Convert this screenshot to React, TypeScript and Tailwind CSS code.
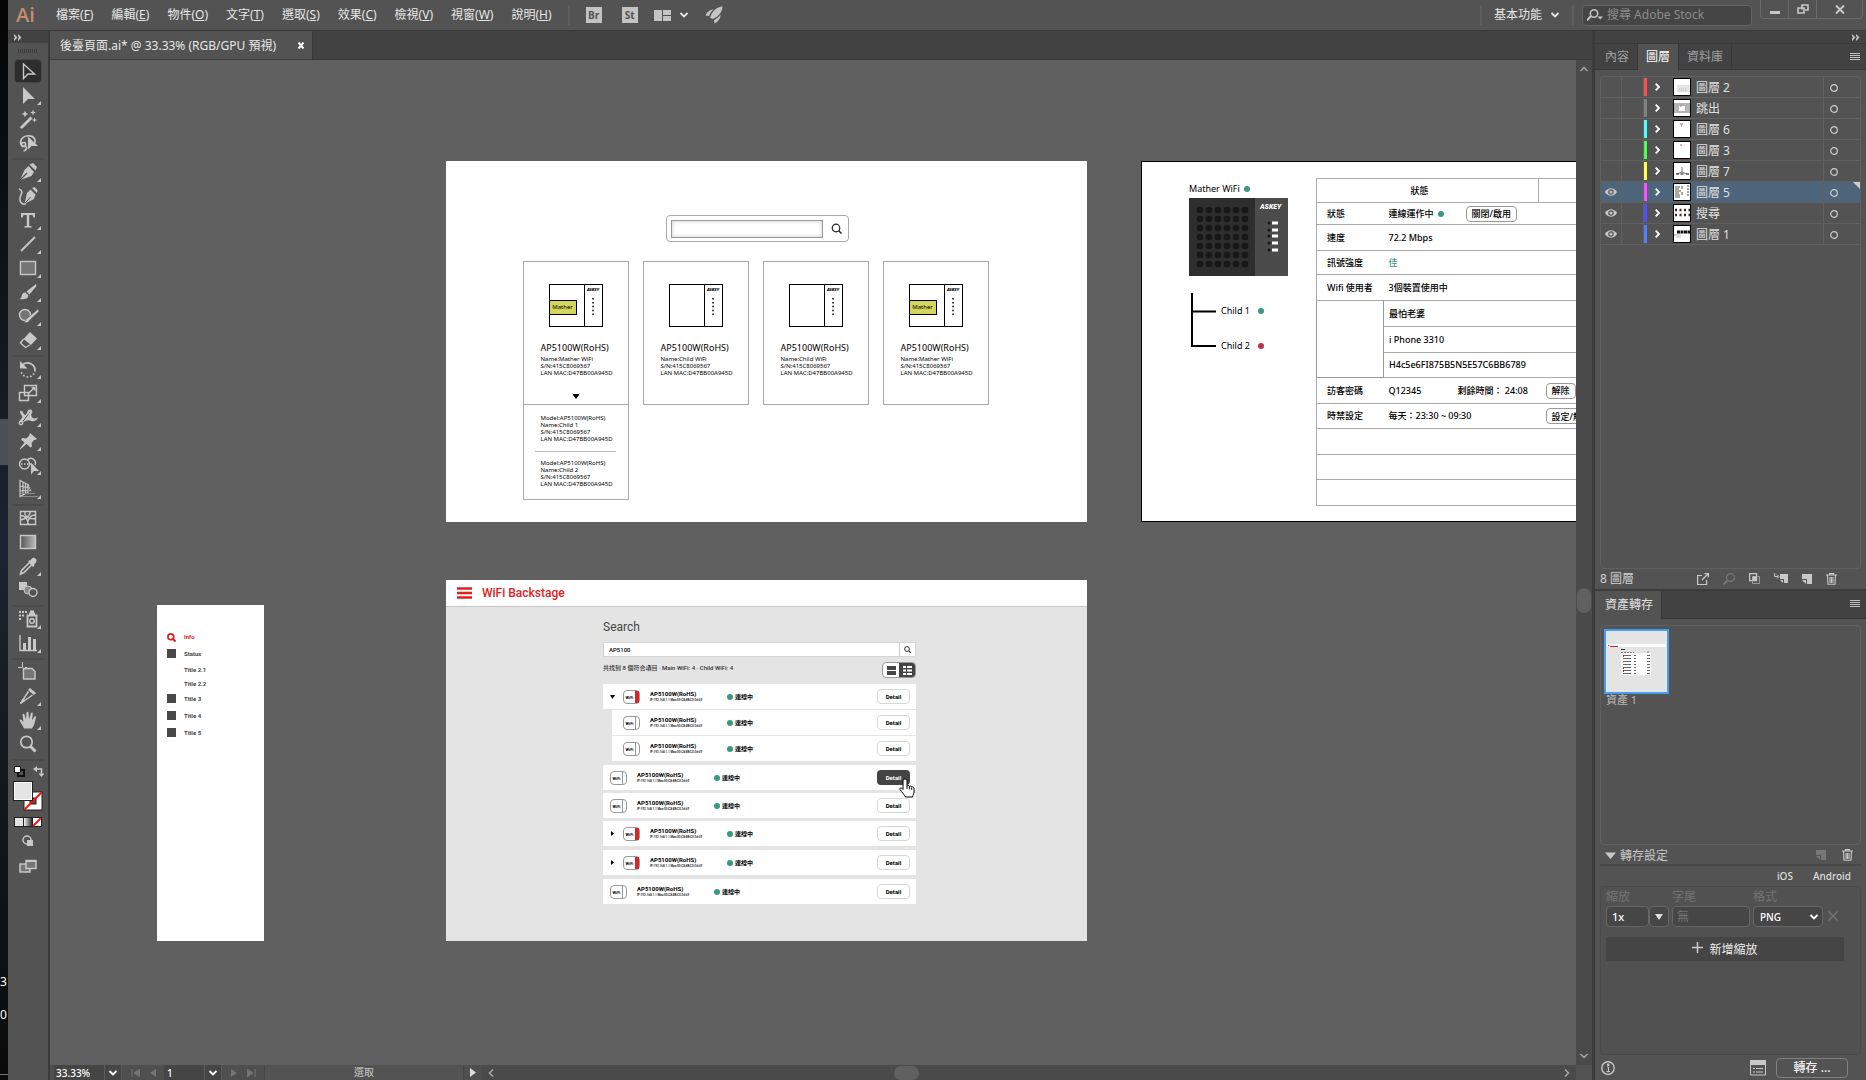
import React from "react";

const MENUS = [
  ["檔案", "F"],
  ["編輯", "E"],
  ["物件", "O"],
  ["文字", "T"],
  ["選取", "S"],
  ["效果", "C"],
  ["檢視", "V"],
  ["視窗", "W"],
  ["說明", "H"],
];

type IconProps = { children: React.ReactNode; w: number; h: number; className?: string };

function Glyph({ children, w, h, className = "" }: IconProps) {
  return (
    <svg width={w} height={h} viewBox={`0 0 ${w} ${h}`} fill="none" className={"block shrink-0 " + className} aria-hidden="true">
      {children}
    </svg>
  );
}

function Chevron({ className = "text-gray-200" }: { className?: string }) {
  return (
    <Glyph w={10} h={8} className={className}>
      <path d="M1.5 2l3.5 3.5L8.5 2" stroke="currentColor" strokeWidth="1.8" />
    </Glyph>
  );
}

function DoubleChevron() {
  return (
    <Glyph w={8} h={7} className="text-[#c8c8c8]">
      <path d="M0 0l3.5 3.5L0 7V5l1-1.5L0 2zM4 0l3.5 3.5L4 7V5l1-1.5L4 2z" fill="currentColor" />
    </Glyph>
  );
}

function MenuLines() {
  return (
    <Glyph w={10} h={8} className="text-[#c0c0c0]">
      <path d="M0 .5h10M0 2.5h10M0 4.5h10M0 6.5h10" stroke="currentColor" />
    </Glyph>
  );
}

function TitleBar() {
  return (
    <header className="flex h-[31px] shrink-0 items-center border-b border-[#383838] bg-[#535353] text-[12px] leading-4 text-[#e6e6e6]">
      <div className="w-12 pl-2 font-['Open_Sans',sans-serif] text-[20px] leading-[26px] font-semibold text-[#c68e6c]">Ai</div>
      <nav className="flex gap-[18px]">
        {MENUS.map(([name, key]) => (
          <button key={key} className="whitespace-nowrap">
            {name}(<span className="underline">{key}</span>)
          </button>
        ))}
      </nav>
      <div className="ml-4 h-5 w-0.5 bg-[#5e5e5e]" />
      <button className="ml-4 h-4 w-4 bg-[#c4c4c4] font-['Open_Sans',sans-serif] text-[10px] leading-4 font-bold text-[#535353]">Br</button>
      <button className="ml-5 h-4 w-4 bg-[#c4c4c4] font-['Open_Sans',sans-serif] text-[10px] leading-4 font-bold text-[#535353]">St</button>
      <button className="ml-4 flex items-center gap-2" aria-label="排列文件">
        <Glyph w={17} h={11} className="text-[#c4c4c4]">
          <path d="M0 0h8v11H0zM9 0h8v5H9zM9 6h8v5H9z" fill="currentColor" />
        </Glyph>
        <Chevron />
      </button>
      <button className="ml-4" aria-label="GPU 效能">
        <Glyph w={18} h={18} className="text-[#c4c4c4]">
          <path d="M17.5.5C12 1 7.500 4.500 5 11.500l2.500 1.500C13.500 11 17.500 6 17.500.5zM8.500 3.500C5 3.500 2 6 .5 9.500l3.500.5c.8-2.500 2.500-5 4.500-6.500zM15.500 8.500c-1.500 2.500-4 4.300-6.500 5.500L9.500 17.500C13 16 15.500 12.500 15.500 8.500z" fill="currentColor" />
        </Glyph>
      </button>
      <div className="ml-auto h-5 w-0.5 bg-[#5e5e5e]" />
      <button className="ml-3 flex items-center gap-2">
        基本功能
        <Chevron />
      </button>
      <div className="ml-3 h-5 w-0.5 bg-[#5e5e5e]" />
      <label className="ml-2 flex h-[21px] w-[170px] items-center gap-1 rounded border border-[#636363] bg-[#454545] px-1">
        <Glyph w={16} h={12} className="text-[#c4c4c4]">
          <circle cx="7" cy="4.5" r="3.7" stroke="currentColor" strokeWidth="1.5" />
          <path d="M4 7L0 11.5" stroke="currentColor" strokeWidth="2" />
          <path d="M10.5 7.5h5.5L13.2 10.5z" fill="currentColor" />
        </Glyph>
        <input aria-label="搜尋 Adobe Stock" placeholder="搜尋 Adobe Stock" className="w-full min-w-0 bg-transparent outline-none placeholder:text-[#8c8c8c]" />
      </label>
      <div className="mr-[3px] ml-2 flex h-[19px] self-start rounded-b border border-t-0 border-[#6a6a6a] text-[#c8c8c8]">
        <button className="flex w-7 items-center justify-center border-r border-[#6a6a6a]" aria-label="最小化">
          <Glyph w={10} h={12}><path d="M0 8h10v3H0z" fill="currentColor" /></Glyph>
        </button>
        <button className="flex w-7 items-center justify-center border-r border-[#6a6a6a]" aria-label="還原">
          <Glyph w={12} h={10}>
            <path d="M5 5.5V1h6v5H8M1 4h6v5H1z" stroke="currentColor" strokeWidth="1.6" />
          </Glyph>
        </button>
        <button className="flex w-[45px] items-center justify-center" aria-label="關閉">
          <Glyph w={10} h={9}><path d="M1 .5l8 8M9 .5l-8 8" stroke="currentColor" strokeWidth="2" /></Glyph>
        </button>
      </div>
    </header>
  );
}

type Tool = { name: string; art: React.ReactNode; more?: boolean; active?: boolean };

const S = { stroke: "currentColor", strokeWidth: 1.4 };
const F = { fill: "currentColor" };

const TOOL_GROUPS: Tool[][] = [
  [
    { name: "選取", active: true, art: <path d="M7.5 5v14.5l4.5-4.5h6.5z" {...S} /> },
    { name: "直接選取", more: true, art: <path d="M7 4v17l5-5h7z" {...F} /> },
    {
      name: "魔術棒",
      art: (
        <>
          <path d="M4 20L14.5 9.5l2 2L6.5 21.5q-2 .5-2.5-1.5z" {...F} />
          <path d="M9 3.5l1 2.5 2.5 1L10 8 9 10.5 8 8 5.5 7 8 6zM17 2.5l.8 2.2 2.2.8-2.2.8L17 8.5l-.8-2.2-2.2-.8 2.2-.8zM18.5 10.5l.7 1.8 1.8.7-1.8.7-.7 1.8-.7-1.8L16 13l1.8-.7z" {...F} />
        </>
      ),
    },
    {
      name: "套索",
      art: (
        <>
          <path d="M9 15.5C4 15 3.5 10.5 6 7.5c4-4.5 12-3 13 1.5.5 1.5 0 3-1 4M8 11.5c-3 0-3.5 4-.5 4s2.5-4 .5-4zM10 15.5c1.5 2 0 4-2.5 4.5" {...S} strokeWidth="1.7" />
          <path d="M12 5.5v13l3.5-3.5H22z" {...F} />
        </>
      ),
    },
  ],
  [
    { name: "鋼筆", more: true, art: <><path d="M13.5 4.5l6 6 1.5-3.5-4-4zM12.5 6l5.5 6-2.5 4L4 20l4.500-10z" {...F} /><path d="M4 20l7-7" stroke="#535353" strokeWidth="1.2" /></> },
    { name: "曲線", art: <><path d="M16 4l5 5 .5-3-3-3zM14.5 5.5l5 5-1.500 4.500-9.500 5L11 9z" {...F} /><path d="M8.5 20l6-7" stroke="#535353" /><path d="M3 5c3 1 3.5 3 2 6s-2 5 0 7.500 4 2 5 1" {...S} strokeWidth="1.6" /></> },
    { name: "文字", more: true, art: <path d="M5 5h14v4.5h-1.5L16.5 7H13.2v11H15.5v1.5h-7V18h2.3V7H7.5L6.5 9.5H5z" {...F} /> },
    { name: "線段", more: true, art: <path d="M5 19L19 5" {...S} strokeWidth="2" /> },
    { name: "矩形", more: true, art: <rect x="4.5" y="5.5" width="15" height="13" fill="#757575" {...S} /> },
    { name: "筆刷", more: true, art: <><path d="M20 4L10.500 11.500l3 3L20.500 6z" {...F} /><path d="M9.5 12.5c-3 0-3.500 2-4 4.500L4 19c4 .8 8 0 8.500-3.500z" {...F} /></> },
    { name: "點滴筆刷", more: true, art: <><circle cx="9" cy="11" r="5.5" fill="#757575" {...S} /><path d="M22 5L11.5 14c-2 .5-2 3-3.500 4.500 3 .5 5 0 6-2.500L23 7.500z" {...F} stroke="#535353" strokeWidth=".6" /></> },
    { name: "橡皮擦", more: true, art: <><path d="M14 4l7 6.500-6 6.500-7.500-6z" {...F} /><path d="M7.5 11L4.5 15l5 4.500 4.500-2.500" {...S} /></> },
  ],
  [
    { name: "旋轉", more: true, art: <><path d="M7 7.500c5-4 12 0 12 5.500" {...S} strokeWidth="1.8" /><path d="M4 4v7.500h7.500z" {...F} /><path d="M19 13c0 4-3.500 7-7 7s-7-3-7-6" {...S} strokeWidth="1.6" strokeDasharray="1.6 2" /></> },
    { name: "縮放", more: true, art: <><path d="M8.5 4.5h12v10h-12zM3.5 11.5h9v8h-9zM12 13l6-6" {...S} /><path d="M15 6h4.500v4.500z" {...F} /></> },
    { name: "寬度", more: true, art: <><path d="M4 6c3-1 3 3 5 4 2 0 2-5 5-5 2 2 0 6 3 8 2 1 4 0 5-1-1 4-4 5-7 4-3-2-6 0-9 2l-2-2c1-3 3-3 2-5C5 9 4 8 4 6z" {...F} /><path d="M5 19L14 7" stroke="#535353" /><circle cx="5" cy="18" r="1.7" {...S} /><circle cx="14" cy="7" r="1.7" {...S} /></> },
    { name: "操控彎曲", more: true, art: <path d="M14 4l7 6-2 1-1 0-2.500 3 .5 3.500-1.500 1L10.500 15 4 20.500 3.500 20 8.500 13.500 5 10.500 6.500 9l3.500.5L13 7z" {...F} /> },
    { name: "形狀建立程式", more: true, art: <><circle cx="8.5" cy="11" r="5" {...S} /><path d="M11 7c4-4 10 0 8 5" {...S} /><path d="M5 11h10" {...S} strokeDasharray="1.5 1.5" /><path d="M15 9.500v12l3-3.500h5z" {...F} /></> },
    { name: "透視格點", more: true, art: <><path d="M4 3.500l8 4v8l-8 4zM7 5v13M9.500 6.500v10M4 9l8 1.500M4 14l8-.5" {...S} strokeWidth="1.2" /><path d="M12 8l3 7" {...S} strokeWidth="2" strokeDasharray="1.5 1" /><path d="M5 16.500h14M5 19.500h17" stroke="#8a8a8a" /></> },
  ],
  [
    { name: "網格", art: <path d="M4.5 5.5h15v13h-15zM4.5 14c5-1 9-3 10-8.500M9 5.500c-1 5 4 8 10.500 7M4.500 9.500c4 0 7 3 8 9M19.500 9c-5 0-8 4-8 9.500" {...S} /> },
    { name: "漸層", art: <><defs><linearGradient id="grad-tool"><stop stopColor="#555" /><stop offset="1" stopColor="#bbb" /></linearGradient></defs><rect x="4.5" y="5.5" width="15" height="13" fill="url(#grad-tool)" {...S} /></> },
    { name: "檢色滴管", more: true, art: <><path d="M14 6.500l2-2c2-2 6 1 4 4l-2 2 .5 1-1.500 1.500-5-5L13.500 6z" {...F} /><path d="M13 9l-7.500 7.500L4.500 20l3.500-1.500L15.500 11" {...S} strokeWidth="1.6" /></> },
    { name: "漸變", art: <><path d="M3 4h8v8H3z" {...F} /><circle cx="12" cy="12" r="4" fill="#8a8a8a" stroke="#c8c8c8" /><circle cx="17" cy="14.5" r="4" fill="#535353" {...S} /></> },
  ],
  [
    { name: "符號噴灑器", more: true, art: <><path d="M3 4h2v2H3zM6 4h2v2H6zM9 4h2v2H9zM3 7.500h2v2H3zM6 7.500h2v2H6zM3 11h2v2H3zM14 3.500h4v3h-4z" {...F} /><path d="M11.500 8.500h9v11h-9zM13 6.500h6" {...S} strokeWidth="1.8" /><circle cx="16" cy="14" r="2.3" {...S} /></> },
    { name: "長條圖", more: true, art: <><path d="M4 4v15.500h17" {...S} /><path d="M7 12h3v7H7zM12 6h3v13h-3zM17 8h3v11h-3z" {...F} /></> },
  ],
  [
    { name: "工作區域", art: <><path d="M6.500 2v5.500H2M9 7.500h2" {...S} strokeWidth="1" /><path d="M7.500 8.500h8.500l3 3v7.500H7.500z" fill="#757575" {...S} /></> },
    { name: "切片", more: true, art: <><path d="M14 4l6 5-2 2-6-5z" {...F} /><path d="M12.500 7.500L4.500 19.500 16.500 11" {...S} /><path d="M4 20l6-4-3.500-1z" {...F} /></> },
    { name: "手形", more: true, art: <path d="M8 20.500C7 17.500 4 14 3.500 12c1-1 2.500 0 4 2L6.500 6.500c.5-1 1.700-1 2 0L10 11.500 10.500 4.500c.5-1 1.700-1 2 0l.5 7L15 5c.7-1 1.800-.5 1.800.5L16 12.500l2.500-4c.8-.7 1.700 0 1.500 1-1 3.500-1.500 8-4 11z" {...F} /> },
    { name: "縮放顯示", art: <><circle cx="10.5" cy="10" r="5.7" {...S} strokeWidth="1.7" /><path d="M14.500 14.500l5 5" {...S} strokeWidth="3" /></> },
  ],
];

function Toolbar() {
  return (
    <aside className="flex w-[42px] shrink-0 flex-col border-r-2 border-[#3b3b3b] bg-[#535353] text-[#c8c8c8]">
      <div className="flex h-3 items-center bg-[#424242] pl-1.5">
        <DoubleChevron />
      </div>
      <div className="flex h-4 items-center justify-center">
        <Glyph w={20} h={4}>
          <path d="M0 2h20" stroke="#3c3c3c" strokeWidth="4" strokeDasharray="1 1" />
        </Glyph>
      </div>
      {TOOL_GROUPS.map((group, i) => (
        <div key={i} className="mx-1 flex flex-col border-b-2 border-[#4b4b4b] pb-[3px]">
          {group.map((t) => (
            <button key={t.name} aria-label={t.name} className={t.active ? "mx-0.5 flex h-6 justify-center rounded-sm border border-[#484848] bg-[#2d2d2d]" : "flex h-6 justify-center"}>
              <svg width="32" height="24" viewBox="0 0 32 24" fill="none" className="block shrink-0" aria-hidden="true">
                <g transform={t.active ? "translate(4 -1)" : "translate(4 0)"}>{t.art}</g>
                {t.more && <path d="M29 18v4h-4z" fill="currentColor" />}
              </svg>
            </button>
          ))}
        </div>
      ))}
      <div className="flex flex-col items-center">
        <div className="mt-1 flex gap-2">
          <Glyph w={12} h={12}>
            <path d="M5 5h6v6H5z" stroke="#111" strokeWidth="2" />
            <path d="M1.5 1.5h6v6h-6z" fill="#fff" stroke="#111" />
          </Glyph>
          <Glyph w={11} h={12} className="text-[#c8c8c8]">
            <path d="M3 4h5.5v5" stroke="currentColor" strokeWidth="1.5" />
            <path d="M0 4l4-3v6zM5.5 8.500h6L8.500 12z" fill="currentColor" />
          </Glyph>
        </div>
        <Glyph w={30} h={30} className="mt-1">
          <rect x="11" y="11" width="18" height="18" fill="#fff" stroke="#222" />
          <rect x="17" y="17" width="6" height="6" fill="#535353" stroke="#222" />
          <path d="M11.5 28.5l17-17" stroke="#f11" strokeWidth="2" />
          <rect x=".5" y=".5" width="19" height="19" fill="#e4e4e4" stroke="#222" />
          <rect x="1.5" y="1.5" width="17" height="17" stroke="#fff" />
        </Glyph>
        <Glyph w={28} h={10} className="mt-1.5">
          <defs>
            <linearGradient id="swatch"><stop stopColor="#fff" /><stop offset="1" stopColor="#222" /></linearGradient>
          </defs>
          <rect x=".5" y=".5" width="27" height="9" fill="#e4e4e4" stroke="#222" />
          <rect x="9.5" y=".5" width="9" height="9" fill="url(#swatch)" stroke="#222" />
          <rect x="18.5" y=".5" width="9" height="9" fill="#fff" stroke="#222" />
          <path d="M19 9l8-8" stroke="#f11" strokeWidth="2" />
        </Glyph>
        <Glyph w={12} h={12} className="mt-2">
          <circle cx="5" cy="5" r="4" stroke="#c8c8c8" strokeWidth="1.5" />
          <path d="M5 5h6v6H5z" fill="#c8c8c8" />
        </Glyph>
        <Glyph w={18} h={14} className="mt-3">
          <path d="M1 5h10v8H1z" fill="#757575" stroke="#c8c8c8" strokeWidth="1.5" />
          <path d="M7 1.500h10v8H7z" fill="#757575" stroke="#c8c8c8" strokeWidth="1.5" />
          <path d="M7 2h10" stroke="#c8c8c8" strokeWidth="2" />
        </Glyph>
      </div>
    </aside>
  );
}

function Dot({ color = "bg-[#389980]" }: { color?: string }) {
  return <span className={"inline-block h-1.5 w-1.5 shrink-0 rounded-full " + color} />;
}

function RouterOutline({ mather }: { mather: boolean }) {
  return (
    <div className="mx-auto flex h-[43px] w-[54px] items-center border border-black">
      {mather && (
        <span className="mt-1 h-[15px] w-[27px] border border-l-0 border-black bg-[#d3d55c] text-center text-[6px] leading-3 text-black">Mather</span>
      )}
      <div className="ml-auto flex h-full w-[18px] flex-col items-center border-l border-black">
        <span className="mt-0.5 text-[4px] leading-[5px] font-black italic">ASKEY</span>
        <Glyph w={2} h={18} className="mt-1.5">
          <path d="M1 0v18" stroke="#000" strokeWidth="1.5" strokeDasharray="1.5 2.4" />
        </Glyph>
      </div>
    </div>
  );
}

const CARDS = [
  { name: "Mather WiFi", mather: true, open: true },
  { name: "Child WiFi", mather: false, open: false },
  { name: "Child WiFi", mather: false, open: false },
  { name: "Mather WiFi", mather: true, open: false },
];

function SearchArtboard() {
  return (
    <section className="absolute top-[101px] left-[396px] flex h-[361px] w-[641px] flex-col items-center bg-white text-black">
      <div className="mt-[54px] mr-[18px] flex h-[27px] w-[183px] items-center rounded-sm border border-[#a8a8a8] pl-1">
        <input aria-label="搜尋裝置" className="h-[18px] w-[152px] border border-[#999] shadow-[inset_0_0_4px_#ccc] outline-none" />
        <button aria-label="搜尋" className="ml-2">
          <Glyph w={11} h={11}>
            <circle cx="5" cy="5" r="3.8" stroke="#222" strokeWidth="1.2" />
            <path d="M7.5 7.5L10.5 10.5" stroke="#222" strokeWidth="1.5" />
          </Glyph>
        </button>
      </div>
      <div className="mt-[19px] mr-[22px] flex items-start gap-[14px]">
        {CARDS.map((c, i) => (
          <article key={i} className="w-[106px]">
            <div className="flex h-[144px] flex-col border border-[#a8a8a8] pt-[22px]">
              <RouterOutline mather={c.mather} />
              <h3 className="mt-[15px] pl-[17px] text-[9px] leading-3">AP5100W(RoHS)</h3>
              <p className="mt-0.5 pl-[17px] text-[6px] leading-[7px] whitespace-nowrap">
                Name:{c.name}
                <br />
                S/N:415C8069567
                <br />
                LAN MAC:D47BB00A945D
              </p>
              {c.open && (
                <Glyph w={6} h={5} className="mx-auto mt-[17px]">
                  <path d="M0 0h6v1L3 5 0 1z" fill="#000" />
                </Glyph>
              )}
            </div>
            {c.open && (
              <div className="-mt-px flex h-24 flex-col border border-[#a8a8a8] pt-2.5 pl-[17px] text-[6px] leading-[7px] whitespace-nowrap">
                <p>Model:AP5100W(RoHS)<br />Name:Child 1<br />S/N:415C8069567<br />LAN MAC:D47BB00A945D</p>
                <hr className="mt-2 mr-3 -ml-1.5 border-[#b8b8b8]" />
                <p className="mt-2">Model:AP5100W(RoHS)<br />Name:Child 2<br />S/N:415C8069567<br />LAN MAC:D47BB00A945D</p>
              </div>
            )}
          </article>
        ))}
      </div>
    </section>
  );
}

function DevicePhoto() {
  return (
    <Glyph w={99} h={78} className="mt-[3px]">
      <rect width="99" height="78" fill="#2e2e2e" />
      <rect x="66" width="33" height="78" fill="#4b4b4b" />
      {[0, 1, 2, 3, 4, 5, 6].map((r) =>
        [0, 1, 2, 3, 4, 5].map((c) => <circle key={`${r}-${c}`} cx={11 + c * 9} cy={12 + r * 9} r="3.3" fill="#171717" />),
      )}
      <text x="71" y="11" fontSize="7" fontWeight="900" fontStyle="italic" fill="#fff" fontFamily="Roboto, sans-serif">ASKEY</text>
      {[25, 32, 38, 45, 52].map((y) => (
        <g key={y}>
          <circle cx="80" cy={y} r="1.5" fill="#171717" />
          <rect x="83" y={y - 1.5} width="6" height="3" fill="#fff" />
        </g>
      ))}
    </Glyph>
  );
}

const CELL = "border-y border-[#aaa] p-0 pl-[5px] font-medium whitespace-nowrap";
const LABEL = "border-y border-l border-[#aaa] p-0 pl-2.5 text-left font-medium whitespace-nowrap";
const PILL = "inline-block h-4 rounded border border-[#999] px-[5px] leading-[13px] bg-white";

function StatusArtboard() {
  return (
    <section className="absolute top-[101px] left-[1091px] flex h-[361px] w-[642px] border border-black bg-white text-[9px] leading-3 text-black">
      <div className="ml-[47px] w-[127px] shrink-0 pt-[21px]">
        <div className="flex items-center gap-1">
          Mather WiFi <Dot />
        </div>
        <DevicePhoto />
        <div className="mt-4 flex">
          <Glyph w={26} h={56} className="ml-0.5">
            <path d="M1 1v53M1 19.5h24M0 54h25" stroke="#000" strokeWidth="2" />
          </Glyph>
          <ul className="mt-[13px] ml-1 flex flex-col gap-[23px]">
            <li className="flex items-center gap-2">Child 1 <Dot /></li>
            <li className="flex items-center gap-2">Child 2 <Dot color="bg-[#bf3447]" /></li>
          </ul>
        </div>
      </div>
      <table className="mt-4 h-[327px] w-[444px] shrink-0 table-fixed border-collapse self-start border border-[#aaa]">
        <colgroup>
          <col className="w-[67px]" />
          <col className="w-[155px]" />
          <col />
        </colgroup>
        <tbody>
          <tr className="h-6">
            <th colSpan={2} className="border border-[#aaa] p-0 pr-4 font-medium">狀態</th>
            <th className="border border-[#aaa] p-0" />
          </tr>
          <tr className="h-[22px]">
            <th className={LABEL}>狀態</th>
            <td colSpan={2} className={CELL}>
              <div className="flex items-center">
                連線運作中
                <span className="ml-1 flex w-7"><Dot /></span>
                <button className={PILL}>關閉/啟用</button>
              </div>
            </td>
          </tr>
          <tr className="h-[26px]"><th className={LABEL}>速度</th><td colSpan={2} className={CELL}>72.2 Mbps</td></tr>
          <tr className="h-6"><th className={LABEL}>訊號強度</th><td colSpan={2} className={CELL + " text-[#389980]"}>佳</td></tr>
          <tr className="h-[26px]"><th className={LABEL}>Wifi 使用者</th><td colSpan={2} className={CELL}>3個裝置使用中</td></tr>
          <tr className="h-[26px]">
            <th rowSpan={3} className="border border-[#999] p-0" />
            <td colSpan={2} className={CELL}>最怕老婆</td>
          </tr>
          <tr className="h-[26px]"><td colSpan={2} className={CELL}>i Phone 3310</td></tr>
          <tr className="h-[25px]"><td colSpan={2} className={CELL}>H4c5e6FI875B5N5E57C6BB6789</td></tr>
          <tr className="h-[26px]">
            <th className={LABEL}>訪客密碼</th>
            <td colSpan={2} className={CELL}>
              <div className="flex items-center">
                <span className="w-[69px]">Q12345</span>
                <span className="w-[88px]">剩餘時間： 24:08</span>
                <button className={PILL}>解除</button>
              </div>
            </td>
          </tr>
          <tr className="h-[25px]">
            <th className={LABEL}>時禁設定</th>
            <td colSpan={2} className={CELL}>
              <div className="flex items-center">
                <span className="w-[157px]">每天：23:30 ~ 09:30</span>
                <button className={PILL}>設定/解除</button>
              </div>
            </td>
          </tr>
          <tr className="h-[26px]"><td colSpan={3} className={CELL} /></tr>
          <tr className="h-[25px]"><td colSpan={3} className={CELL} /></tr>
          <tr className="h-[26px]"><td colSpan={3} className={CELL} /></tr>
        </tbody>
      </table>
    </section>
  );
}

type Row = { kind: "open" | "child" | "closed" | "single"; gap: string; hover?: boolean };
const ROWS: Row[] = [
  { kind: "open", gap: "mt-1.5" },
  { kind: "child", gap: "mt-px" },
  { kind: "child", gap: "mt-px" },
  { kind: "single", gap: "mt-1", hover: true },
  { kind: "single", gap: "mt-[3px]" },
  { kind: "closed", gap: "mt-[3px]" },
  { kind: "closed", gap: "mt-1" },
  { kind: "single", gap: "mt-1" },
];

function DeviceBadge({ red }: { red: boolean }) {
  return (
    <span className="flex h-[14px] w-[17px] shrink-0 rounded-sm border border-[#999] bg-white">
      <span className="flex-1 text-center text-[4px] leading-[13px] font-bold">WiFi</span>
      <span className={red ? "w-1 bg-[#dd2420]" : "w-1 border-l border-[#999]"} />
    </span>
  );
}

function BackstageArtboard() {
  return (
    <section className="absolute top-[520px] left-[396px] h-[361px] w-[641px] bg-[#e4e4e4] font-[Roboto,'Noto_Sans_CJK_TC',sans-serif] text-black">
      <div className="flex h-[27px] items-center border-b border-[#c4c4c4] bg-white pl-[11px] text-[#e0201c]">
        <Glyph w={15} h={12}>
          <path d="M0 1.5h15M0 6h15M0 10.5h15" stroke="currentColor" strokeWidth="2.4" />
        </Glyph>
        <h1 className="ml-2.5 text-[12px] leading-4 font-medium">WiFi Backstage</h1>
      </div>
      <div className="ml-[157px] w-[313px]">
        <h2 className="pt-3 text-[12px] leading-4 text-[#444]">Search</h2>
        <div className="mt-[7px] flex h-[15px] border border-[#d4d4d4] bg-white">
          <input aria-label="Search" defaultValue="AP5100" className="min-w-0 flex-1 pl-[5px] text-[6px] leading-3 font-medium outline-none" />
          <button aria-label="Search" className="flex w-4 items-center justify-center border-l border-[#ccc]">
            <Glyph w={7} h={7}>
              <circle cx="3" cy="3" r="2.4" stroke="#333" />
              <path d="M5 5l2 2" stroke="#333" strokeWidth="1.2" />
            </Glyph>
          </button>
        </div>
        <div className="mt-1 flex h-[17px] items-start justify-between">
          <p className="mt-[3px] text-[6px] leading-2 font-medium whitespace-pre text-[#333]">{"共找到 8 個符合項目 · Main WiFi: 4 · Child WiFi: 4"}</p>
          <div className="mt-px flex h-4 w-[34px] overflow-hidden rounded-sm border border-[#999] bg-white">
            <button aria-label="格狀" className="flex flex-1 items-center justify-center">
              <Glyph w={9} h={9}><path d="M0 0h9v4H0zM0 5h9v4H0z" fill="#444" /></Glyph>
            </button>
            <button aria-label="列表" className="flex flex-1 items-center justify-center bg-[#444]">
              <Glyph w={9} h={9}><path d="M0 0h3v2H0zM4 0h5v2H4zM0 3.5h3v2H0zM4 3.5h5v2H4zM0 7h3v2H0zM4 7h5v2H4z" fill="#fff" /></Glyph>
            </button>
          </div>
        </div>
        <ul>
          {ROWS.map((r, i) => (
            <li key={i} className={`${r.gap} ${r.kind === "child" ? "ml-[9px] pl-[11px]" : "pl-[7px]"} flex h-[25px] items-center bg-white pr-1.5`}>
              {(r.kind === "open" || r.kind === "closed") && (
                <Glyph w={5} h={5} className="mr-2">
                  <path d={r.kind === "open" ? "M0 1h5L2.5 5z" : "M1 0v5l3-2.5z"} fill="#000" />
                </Glyph>
              )}
              <DeviceBadge red={r.kind === "open" || r.kind === "closed"} />
              <div className="mb-0.5 ml-2.5 w-[77px] whitespace-nowrap">
                <h3 className="text-[6px] leading-2 font-bold">AP5100W(RoHS)</h3>
                <p className="text-[3px] leading-1 font-medium">IP:192.168.1.1 Mac:00:C8:8B:C0:2d:69</p>
              </div>
              <span className="flex items-center gap-0.5 text-[6px] leading-2 font-bold">
                <Dot />
                連線中
              </span>
              <button className={r.hover ? "ml-auto h-[15px] w-[33px] rounded-sm bg-[#444] text-[6px] leading-3 font-bold text-white" : "ml-auto h-[15px] w-[33px] rounded-sm border border-[#d8d8d8] bg-white text-[6px] leading-3 font-bold"}>
                Detail
              </button>
            </li>
          ))}
        </ul>
      </div>
      <Glyph w={16} h={20} className="absolute top-[198px] left-[453px]">
        <path d="M6 1c1.5 0 2 1 2 2v5c.8-.8 2-.6 2.4.3.8-.6 2-.3 2.3.7 1-.4 2.3.2 2.3 1.5V14c0 2-1 3-1.5 5H6.5C5.5 17 3 14.5 1 11.5c-.5-1.5 1-2 2-1l1 1V3c0-1 .7-2 2-2z" fill="#fff" stroke="#000" />
        <path d="M8 8v3M10.4 8.5v2.8M12.7 9.5v2.3" stroke="#000" />
      </Glyph>
    </section>
  );
}

const NAV = [
  { t: "Status", sub: false, h: "h-[17px]" },
  { t: "Title 2.1", sub: true, h: "h-4" },
  { t: "Title 2.2", sub: true, h: "h-3" },
  { t: "Title 3", sub: false, h: "h-[17px]" },
  { t: "Title 4", sub: false, h: "h-[17px]" },
  { t: "Title 5", sub: false, h: "h-[17px]" },
];

function NavArtboard() {
  return (
    <section className="absolute top-[545px] left-[107px] h-[336px] w-[107px] bg-white pt-6 pl-2.5 font-[Roboto,sans-serif] text-[6px] leading-2 font-bold text-[#444]">
      <a href="#info" className="flex h-4 items-center gap-2 text-[#e0201c]">
        <Glyph w={9} h={9}>
          <circle cx="3.8" cy="3.8" r="2.9" stroke="currentColor" strokeWidth="1.7" />
          <path d="M6 6l2.5 2.5" stroke="currentColor" strokeWidth="2.2" />
        </Glyph>
        Info
      </a>
      {NAV.map((n) => (
        <a key={n.t} href={"#" + n.t.replace(/\W/g, "")} className={`flex items-center gap-2 ${n.h}`}>
          <span className={n.sub ? "w-[9px]" : "h-[9px] w-[9px] bg-[#484848]"} />
          {n.t}
        </a>
      ))}
    </section>
  );
}

function StatusBar() {
  const combo = "flex h-full items-center border-r border-[#5c5c5c] bg-[#454545]";
  return (
    <footer className="flex h-[15px] shrink-0 items-center bg-[#4f4f4f] pl-1 text-[11px] leading-[14px] text-white">
      <div className={combo}>
        <input aria-label="縮放顯示比例" defaultValue="33.33%" className="w-[50px] pl-0.5 text-[10px] leading-[14px] font-medium outline-none" />
        <button aria-label="選擇縮放顯示比例" className="flex h-full w-[17px] items-center justify-center border-l border-[#5c5c5c]"><Chevron className="text-white" /></button>
      </div>
      <div className="flex w-[42px] items-center justify-center gap-2.5 text-[#757575]">
        <button aria-label="第一個"><Glyph w={9} h={8}><path d="M1 0v8M9 0v8L3 4z" fill="currentColor" stroke="currentColor" /></Glyph></button>
        <button aria-label="上一個"><Glyph w={6} h={8}><path d="M6 0v8L0 4z" fill="currentColor" /></Glyph></button>
      </div>
      <div className={combo}>
        <input aria-label="工作區域" defaultValue="1" className="w-10 pl-[3px] text-[10px] leading-[14px] font-medium outline-none" />
        <button aria-label="選擇工作區域" className="flex h-full w-[17px] items-center justify-center border-l border-[#5c5c5c]"><Chevron className="text-white" /></button>
      </div>
      <div className="flex w-[42px] items-center justify-center gap-2.5 text-[#757575]">
        <button aria-label="下一個"><Glyph w={6} h={8}><path d="M0 0v8l6-4z" fill="currentColor" /></Glyph></button>
        <button aria-label="最後一個"><Glyph w={9} h={8}><path d="M8 0v8M0 0v8l6-4z" fill="currentColor" stroke="currentColor" /></Glyph></button>
      </div>
      <div className="h-full w-[200px] border-x border-[#454545] bg-[#535353] text-center text-[10px] text-[#c8c8c8]">選取</div>
      <button aria-label="狀態選單" className="flex w-[18px] justify-center"><Glyph w={6} h={9}><path d="M0 0v9l6-4.5z" fill="#ddd" /></Glyph></button>
      <div className="flex h-full flex-1 items-center justify-between bg-[#4a4a4a] px-1.5 text-[#a8a8a8]">
        <Glyph w={6} h={8}><path d="M5 .5L1.5 4 5 7.5" stroke="currentColor" strokeWidth="1.5" /></Glyph>
        <div className="mr-[246px] h-[14px] w-[25px] rounded-full bg-[#606060]" />
        <Glyph w={6} h={8}><path d="M1 .5L4.5 4 1 7.5" stroke="currentColor" strokeWidth="1.5" /></Glyph>
      </div>
      <div className="h-full w-4 bg-[#535353]" />
    </footer>
  );
}

function Workspace() {
  return (
    <main className="flex min-w-0 flex-1 flex-col">
      <div className="flex h-[29px] shrink-0 border-b border-[#383838] bg-[#424242]">
        <div className="flex items-center border-r border-[#383838] bg-[#535353] pt-px pr-2 pl-2.5 text-[12px] text-[#e6e6e6]">
          <button className="whitespace-nowrap">後臺頁面.ai* @ 33.33% (RGB/GPU 預視)</button>
          <button aria-label="關閉文件" className="ml-[22px]">
            <Glyph w={6} h={7}><path d="M.5.5l5 6M5.5.5l-5 6" stroke="#fff" strokeWidth="2" /></Glyph>
          </button>
        </div>
      </div>
      <div className="flex min-h-0 flex-1">
        <div className="relative min-w-0 flex-1 overflow-hidden bg-[#606060]">
          <SearchArtboard />
          <StatusArtboard />
          <NavArtboard />
          <BackstageArtboard />
        </div>
        <div className="flex w-4 shrink-0 flex-col items-center bg-[#4a4a4a] py-1.5 text-[#a8a8a8]">
          <Glyph w={8} h={6}><path d="M.5 5L4 1.5 7.5 5" stroke="currentColor" strokeWidth="1.5" /></Glyph>
          <div className="h-[52%]" />
          <div className="h-[25px] w-[14px] rounded-full bg-[#606060]" />
          <Glyph w={8} h={6} className="mt-auto"><path d="M.5 1L4 4.5 7.5 1" stroke="currentColor" strokeWidth="1.5" /></Glyph>
        </div>
      </div>
      <StatusBar />
    </main>
  );
}

const LAYERS = [
  { name: "圖層 2", bar: "bg-[#ff4f4f]", on: false, art: <><path d="M3 6h13v7H3z" fill="#e4e4e4" /><path d="M5 10h7M5 12h7" stroke="#bbb" strokeDasharray="1 1" /></> },
  { name: "跳出", bar: "bg-[#808080]", on: false, art: <><path d="M0 3h16v10H0z" fill="#b4b4b4" /><path d="M5 6h6v5H5z" fill="#fff" /><path d="M6 6h2" stroke="#c66" /></> },
  { name: "圖層 6", bar: "bg-[#4fffff]", on: false, art: <path d="M6 3h3M7 5h1" stroke="#966" /> },
  { name: "圖層 3", bar: "bg-[#4fff4f]", on: false, art: <path d="M6 3h2" stroke="#e55" /> },
  { name: "圖層 7", bar: "bg-[#ffff4f]", on: false, art: <><path d="M8 4v5M3 11l5-2 5 2" stroke="#777" /><path d="M2 11h3M6.5 11h3M12 11h3" stroke="#555" strokeWidth="1.5" /></> },
  { name: "圖層 5", bar: "bg-[#ff4fff]", on: true, art: <path d="M1 3h5M1 5h4M1 7h6M1 9h4M1 11h5M1 13h5M8 2v3M8 8v3M13 2h2M13 5h2M13 8h2M13 11h2" stroke="#555" /> },
  { name: "搜尋", bar: "bg-[#4f4fff]", on: true, art: <path d="M1 5h15M1 10h15" stroke="#422" strokeWidth="2.5" strokeDasharray="2 2.5" /> },
  { name: "圖層 1", bar: "bg-[#4f80ff]", on: true, art: <><path d="M3 6h13" stroke="#111" strokeWidth="3" strokeDasharray="3 .5" /><path d="M2 8h5v4H2z" fill="#ddd" /><path d="M1 8v2" stroke="#c66" /></> },
];

function TrashIcon() {
  return (
    <Glyph w={11} h={12}>
      <path d="M0 2h11M3.5 2V.6h4V2M1.5 2l.5 9.3h7L9.5 2M4 4v6M5.5 4v6M7 4v6" stroke="currentColor" strokeWidth="1.1" />
    </Glyph>
  );
}

function NewIcon() {
  return (
    <Glyph w={10} h={10}>
      <path d="M0 0h10v10H5V5H0zM0 6h4v4z" fill="currentColor" />
    </Glyph>
  );
}

function LayersPanel() {
  return (
    <section className="flex min-h-0 flex-[559_1_0%] flex-col border-b-2 border-[#3b3b3b]">
      <div className="flex h-3 shrink-0 items-center justify-end bg-[#424242] pr-1.5">
        <DoubleChevron />
      </div>
      <div role="tablist" className="flex h-[27px] shrink-0 items-stretch border-t border-[#383838] bg-[#424242] text-[12px] text-[#a0a0a0]">
        <button role="tab" className="border-b border-[#383838] pr-2 pl-2.5">內容</button>
        <button role="tab" aria-selected="true" className="border-x border-[#383838] bg-[#535353] px-2 text-white">圖層</button>
        <button role="tab" className="border-r border-b border-[#383838] px-2">資料庫</button>
        <div className="flex flex-1 items-center justify-end border-b border-[#383838] pr-1.5">
          <MenuLines />
        </div>
      </div>
      <div className="mx-[5px] mt-1.5 min-h-0 flex-1 rounded-sm border border-[#606060]">
        <ul>
          {LAYERS.map((l) => {
            const selected = l.name === "圖層 5";
            return (
              <li key={l.name} className={"relative flex h-[21px] items-center border-b border-[#606060] text-[12px] text-[#e0e0e0] " + (selected ? "bg-[#4f657c]" : "")}>
                <button aria-label={"顯示 " + l.name} className="flex h-full w-[21px] items-center justify-center border-r border-[#606060]">
                  {l.on && (
                    <Glyph w={12} h={8}>
                      <path d="M0 4c3-5 9-5 12 0-3 5-9 5-12 0z" fill="#c8c8c8" />
                      <circle cx="6" cy="4" r="2.2" fill="#c8c8c8" stroke="#535353" strokeWidth="1.2" />
                    </Glyph>
                  )}
                </button>
                <span className="h-full w-[22px] border-r border-[#606060]" />
                <span className={"h-[18px] w-[3px] " + l.bar} />
                <button aria-label={"展開 " + l.name} className="ml-2">
                  <Glyph w={5} h={8}><path d="M.7.7L4 4 .7 7.3" stroke="#fff" strokeWidth="1.8" /></Glyph>
                </button>
                <Glyph w={18} h={18} className="ml-[13px]">
                  <rect x=".5" y=".5" width="17" height="17" fill="#fff" stroke="#000" />
                  <g transform="translate(1 1)">{l.art}</g>
                </Glyph>
                <span className="ml-[5px] pt-0.5 leading-4">{l.name}</span>
                <span className="ml-auto flex h-full w-[37px] items-center border-l border-[#606060] pt-px pl-1.5">
                  <Glyph w={8} h={8}><circle cx="4" cy="4" r="3.3" stroke="#ccc" strokeWidth="1.2" /></Glyph>
                </span>
                {selected && (
                  <Glyph w={7} h={7} className="absolute top-0 right-0"><path d="M0 0h7v7z" fill="#d0d0d0" /></Glyph>
                )}
              </li>
            );
          })}
        </ul>
      </div>
      <div className="flex h-5 shrink-0 items-center justify-between pr-[29px] pl-[5px] text-[12px] text-[#d0d0d0]">
        <span className="leading-4">8 圖層</span>
        <div className="flex items-center gap-[14px] text-[#c8c8c8]">
          <button aria-label="收集以轉存"><Glyph w={12} h={12}><path d="M5 2.5H.6v9h9V7M5 7l6-6M7.5.6h4v4" stroke="currentColor" strokeWidth="1.2" /></Glyph></button>
          <button aria-label="尋找物件" className="text-[#777]"><Glyph w={12} h={12}><circle cx="7.5" cy="4.5" r="3.9" stroke="currentColor" strokeWidth="1.2" /><path d="M5 7L.5 11.5" stroke="currentColor" strokeWidth="1.8" /></Glyph></button>
          <button aria-label="製作剪裁遮色片"><Glyph w={11} h={11}><path d="M.6.6h7v7h-7z" stroke="currentColor" strokeWidth="1.2" /><path d="M3.5 3.5h7v7h-7z" stroke="#999" /><path d="M3.5 3.5h4.5v4.5H3.5z" fill="currentColor" /></Glyph></button>
          <button aria-label="製作新子圖層"><Glyph w={14} h={11}><path d="M6 1h8v9H10V6H6zM6 7h3v3z" fill="currentColor" /><path d="M.6 0v3.5H4M3 1.5l2 2-2 2" stroke="currentColor" /></Glyph></button>
          <button aria-label="製作新圖層"><NewIcon /></button>
          <button aria-label="刪除選取項目"><TrashIcon /></button>
        </div>
      </div>
    </section>
  );
}

function ExportPanel() {
  const field = "h-[21px] rounded-sm border border-[#666] bg-[#464646] leading-4 text-white outline-none";
  return (
    <section className="flex min-h-0 flex-[490_1_0%] flex-col text-[12px] text-[#c8c8c8]">
      <div className="flex h-7 shrink-0 items-stretch bg-[#424242]">
        <button role="tab" className="bg-[#535353] pr-2 pl-2.5 text-[#e0e0e0]">資產轉存</button>
        <div className="flex flex-1 items-center justify-end border-b border-l border-[#383838] pr-1.5"><MenuLines /></div>
      </div>
      <div className="mx-[5px] mt-1.5 min-h-0 flex-[220_1_0%] rounded-sm border border-[#606060] p-[3px]">
        <figure className="w-[65px]">
          <Glyph w={65} h={65}>
            <rect x="1" y="1" width="63" height="63" fill="#e4e4e4" stroke="#459df5" strokeWidth="2" />
            <path d="M3 15h59v3H3z" fill="#fff" />
            <path d="M4 16.5h1.5M6 17.5h8" stroke="#dd2420" strokeWidth="1.2" />
            <path d="M17 20.5h4" stroke="#333" />
            <path d="M17 24h30v22H17z" fill="#fff" />
            <path d="M17 23.5h13M43 23h3" stroke="#777" strokeDasharray="2 1" />
            {[26, 29, 32, 35, 38, 41, 44].map((y) => (
              <g key={y} stroke="#666">
                <path d={`M19 ${y}.5h8M30 ${y}.5h2M43 ${y}.5h3`} />
              </g>
            ))}
            <path d="M19.5 26v2M19.5 38v2M19.5 41v2" stroke="#dd2420" />
          </Glyph>
          <figcaption className="pl-0.5 text-[11px] leading-3 text-[#b8b8b8]">資產 1</figcaption>
        </figure>
      </div>
      <div className="mx-[5px] flex h-[21px] shrink-0 items-center border-b-2 border-[#484848] pr-2 pl-[5px]">
        <button className="flex items-center gap-1 pt-0.5 leading-4">
          <Glyph w={11} h={7}><path d="M0 .5h11L5.5 7z" fill="currentColor" /></Glyph>
          轉存設定
        </button>
        <button aria-label="新增預設" className="ml-auto text-[#777]"><NewIcon /></button>
        <button aria-label="刪除" className="ml-4"><TrashIcon /></button>
      </div>
      <div className="flex h-5 shrink-0 items-center justify-end gap-5 pr-[15px] text-[10px] leading-4 font-medium text-[#ddd]">
        <button>iOS</button>
        <button>Android</button>
      </div>
      <div className="mx-[5px] min-h-0 flex-[171_1_0%] rounded-sm border border-[#4a4a4a] bg-[#515151] px-[5px] pt-0.5">
        <div className="flex items-end gap-[3px]">
          <div className="flex flex-col gap-px">
            <label htmlFor="scale" className="leading-4 text-[#747474]">縮放</label>
            <div className="flex">
              <input id="scale" defaultValue="1x" className={field + " w-[43px] pl-[5px] text-[11px] font-medium"} />
              <button aria-label="選擇縮放" className={field + " flex w-5 items-center justify-center"}>
                <Glyph w={8} h={6}><path d="M0 0h8L4 6z" fill="#ddd" /></Glyph>
              </button>
            </div>
          </div>
          <div className="flex flex-col gap-px">
            <label htmlFor="suffix" className="leading-4 text-[#747474]">字尾</label>
            <input id="suffix" placeholder="無" className={field + " w-[78px] pl-1 text-[12px] placeholder:text-[#747474]"} />
          </div>
          <div className="flex flex-col gap-px">
            <label htmlFor="format" className="leading-4 text-[#747474]">格式</label>
            <div className="relative">
              <select id="format" defaultValue="PNG" className={field + " w-[70px] appearance-none pl-1.5 text-[10px] font-medium"}>
                <option>PNG</option>
                <option>JPG</option>
              </select>
              <span className="pointer-events-none absolute top-[7px] right-1"><Chevron className="text-white" /></span>
            </div>
          </div>
          <button aria-label="移除" className="mb-1.5 ml-0.5">
            <Glyph w={10} h={10}><path d="M.5.5l9 9M9.5.5l-9 9" stroke="#777" strokeWidth="1.2" /></Glyph>
          </button>
        </div>
        <button className="mt-2.5 flex h-6 w-[238px] items-center justify-center gap-1.5 bg-[#454545] pt-px leading-4 text-[#eee]">
          <Glyph w={11} h={11} className="mb-1"><path d="M5.5 0v11M0 5.5h11" stroke="#ccc" strokeWidth="1.5" /></Glyph>
          新增縮放
        </button>
      </div>
      <div className="flex h-[25px] shrink-0 items-center pr-[18px] pl-1.5">
        <button aria-label="資訊">
          <Glyph w={14} h={14}><circle cx="7" cy="7" r="6.2" stroke="currentColor" strokeWidth="1.4" /><path d="M6 6h1.5v4.5M5.5 10.5h3.5M6.5 3h1.5v1.5H6.5z" stroke="currentColor" /></Glyph>
        </button>
        <button aria-label="格式設定" className="ml-auto">
          <Glyph w={16} h={16}><path d="M.5 1h15v14H.5z" stroke="currentColor" /><path d="M0 0h16v5H0z" fill="currentColor" /><path d="M3 8.5h2M3 12h2M6 8.5h7M6 12h7" stroke="currentColor" /></Glyph>
        </button>
        <button className="ml-2.5 h-5 w-[72px] rounded-sm border border-[#808080] leading-4 font-medium text-[#eee]">轉存 ...</button>
      </div>
    </section>
  );
}

export default function App() {
  return (
    <div className="flex h-screen overflow-hidden bg-[#0c0c0f] font-['Noto_Sans','Noto_Sans_CJK_TC',sans-serif]">
      <div className="flex w-2 shrink-0 flex-col overflow-hidden bg-linear-to-b from-[#050505] via-[#1a2430] to-[#0a0a0a] text-[12px] leading-4 text-white">
        <div className="h-[419px] shrink-0" />
        <div className="h-[46px] shrink-0 bg-[#4c4e5a]" />
        <div className="h-[509px] shrink" />
        <span className="shrink-0">3</span>
        <span className="mt-[17px] shrink-0">0</span>
        <div className="mt-[51px] mb-1 h-px shrink-0 bg-[#777]" />
      </div>
      <div className="flex min-w-0 flex-1 flex-col">
        <TitleBar />
        <div className="flex min-h-0 flex-1">
          <Toolbar />
          <Workspace />
          <aside className="flex w-[274px] shrink-0 flex-col border-l-[3px] border-[#3b3b3b] bg-[#535353]">
            <LayersPanel />
            <ExportPanel />
          </aside>
        </div>
      </div>
    </div>
  );
}
